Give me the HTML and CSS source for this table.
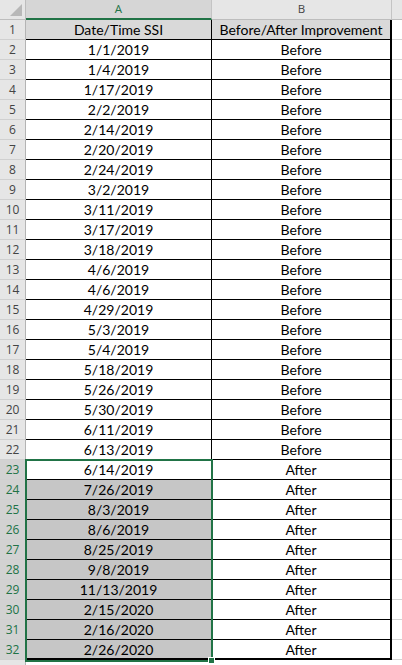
FILE: index.html
```html
<!DOCTYPE html>
<html>
<head>
<meta charset="utf-8">
<link rel="stylesheet" href="styles.css">
</head>
<body>
<div class="sheet">
  <div class="corner"><span class="tri"></span></div>
  <div class="ch ch-sel">A</div>
  <div class="ch">B</div>
  <div class="ch ch-x"></div>

  <div class="rh">1</div><div class="c a hd">Date/Time SSI</div><div class="c b hd">Before/After Improvement</div><div class="x"></div>
  <div class="rh">2</div><div class="c a">1/1/2019</div><div class="c b">Before</div><div class="x"></div>
  <div class="rh">3</div><div class="c a">1/4/2019</div><div class="c b">Before</div><div class="x"></div>
  <div class="rh">4</div><div class="c a">1/17/2019</div><div class="c b">Before</div><div class="x"></div>
  <div class="rh">5</div><div class="c a">2/2/2019</div><div class="c b">Before</div><div class="x"></div>
  <div class="rh">6</div><div class="c a">2/14/2019</div><div class="c b">Before</div><div class="x"></div>
  <div class="rh">7</div><div class="c a">2/20/2019</div><div class="c b">Before</div><div class="x"></div>
  <div class="rh">8</div><div class="c a">2/24/2019</div><div class="c b">Before</div><div class="x"></div>
  <div class="rh">9</div><div class="c a">3/2/2019</div><div class="c b">Before</div><div class="x"></div>
  <div class="rh">10</div><div class="c a">3/11/2019</div><div class="c b">Before</div><div class="x"></div>
  <div class="rh">11</div><div class="c a">3/17/2019</div><div class="c b">Before</div><div class="x"></div>
  <div class="rh">12</div><div class="c a">3/18/2019</div><div class="c b">Before</div><div class="x"></div>
  <div class="rh">13</div><div class="c a">4/6/2019</div><div class="c b">Before</div><div class="x"></div>
  <div class="rh">14</div><div class="c a">4/6/2019</div><div class="c b">Before</div><div class="x"></div>
  <div class="rh">15</div><div class="c a">4/29/2019</div><div class="c b">Before</div><div class="x"></div>
  <div class="rh">16</div><div class="c a">5/3/2019</div><div class="c b">Before</div><div class="x"></div>
  <div class="rh">17</div><div class="c a">5/4/2019</div><div class="c b">Before</div><div class="x"></div>
  <div class="rh">18</div><div class="c a">5/18/2019</div><div class="c b">Before</div><div class="x"></div>
  <div class="rh">19</div><div class="c a">5/26/2019</div><div class="c b">Before</div><div class="x"></div>
  <div class="rh">20</div><div class="c a">5/30/2019</div><div class="c b">Before</div><div class="x"></div>
  <div class="rh">21</div><div class="c a">6/11/2019</div><div class="c b">Before</div><div class="x"></div>
  <div class="rh">22</div><div class="c a">6/13/2019</div><div class="c b">Before</div><div class="x"></div>
  <div class="rh sel">23</div><div class="c a">6/14/2019</div><div class="c b">After</div><div class="x"></div>
  <div class="rh sel">24</div><div class="c a tint">7/26/2019</div><div class="c b">After</div><div class="x"></div>
  <div class="rh sel">25</div><div class="c a tint">8/3/2019</div><div class="c b">After</div><div class="x"></div>
  <div class="rh sel">26</div><div class="c a tint">8/6/2019</div><div class="c b">After</div><div class="x"></div>
  <div class="rh sel">27</div><div class="c a tint">8/25/2019</div><div class="c b">After</div><div class="x"></div>
  <div class="rh sel">28</div><div class="c a tint">9/8/2019</div><div class="c b">After</div><div class="x"></div>
  <div class="rh sel">29</div><div class="c a tint">11/13/2019</div><div class="c b">After</div><div class="x"></div>
  <div class="rh sel">30</div><div class="c a tint">2/15/2020</div><div class="c b">After</div><div class="x"></div>
  <div class="rh sel">31</div><div class="c a tint">2/16/2020</div><div class="c b">After</div><div class="x"></div>
  <div class="rh sel">32</div><div class="c a tint last">2/26/2020</div><div class="c b last">After</div><div class="x"></div>
  <div class="rh"></div><div class="e"></div><div class="e"></div><div class="x"></div>

  <div class="selbox"></div>
  <div class="handle"></div>
</div>
</body>
</html>
```
FILE: styles.css
```css
html, body {
  margin: 0;
  padding: 0;
  background: #ffffff;
  overflow: hidden;
}

.sheet {
  position: relative;
  display: grid;
  grid-template-columns: 26px 186px 180px 10px;
  grid-auto-rows: 20px;
  width: 402px;
  font-family: Lato, "Liberation Sans", Arial, sans-serif;
}

.sheet > div {
  box-sizing: border-box;
}

.corner {
  position: relative;
  background: #e6e6e6;
  border-right: 1px solid #bdbdbd;
  border-bottom: 1px solid #bdbdbd;
}

.tri {
  position: absolute;
  right: 3px;
  bottom: 3px;
  width: 0;
  height: 0;
  border-left: 12px solid transparent;
  border-bottom: 12px solid #b8b8b8;
}

.ch {
  background: #e6e6e6;
  border-right: 1px solid #c4c4c4;
  border-bottom: 1px solid #bdbdbd;
  color: #444444;
  font-family: "Open Sans", "Noto Sans", sans-serif;
  font-size: 11.5px;
  line-height: 18px;
  text-align: center;
}

.ch-sel {
  background: #d6d6d6;
  color: #217346;
  border-bottom: 2px solid #217346;
}

.ch-x {
  border-right: none;
}

.rh {
  background: #e6e6e6;
  border-right: 1px solid #b4b4b4;
  border-bottom: 1px solid #d0d0d0;
  color: #444444;
  font-family: "Open Sans", "Noto Sans", sans-serif;
  font-size: 12px;
  line-height: 19px;
  text-align: center;
}

.rh.sel {
  background: #d2d2d2;
  color: #217346;
}

.c {
  background: #ffffff;
  border-right: 1px solid #000000;
  border-bottom: 1px solid #000000;
  color: #000000;
  font-size: 14px;
  line-height: 20px;
  text-align: center;
  white-space: nowrap;
  overflow: hidden;
}

.c.hd {
  background: #d9d9d9;
}

.c.b {
  border-right: 2px solid #000000;
}

.c.tint {
  background: #c6c6c6;
}

.c.last {
  border-bottom: 2px solid #000000;
}

.x {
  background: #ffffff;
  border-bottom: 1px solid #d4d4d4;
}

.e {
  background: #ffffff;
}

.selbox {
  position: absolute;
  left: 25px;
  top: 459px;
  width: 188px;
  height: 203px;
  box-sizing: border-box;
  border: 2px solid #217346;
  pointer-events: none;
}

.handle {
  position: absolute;
  left: 208px;
  top: 657px;
  width: 7px;
  height: 7px;
  box-sizing: border-box;
  background: #217346;
  border: 1px solid #ffffff;
}
```
